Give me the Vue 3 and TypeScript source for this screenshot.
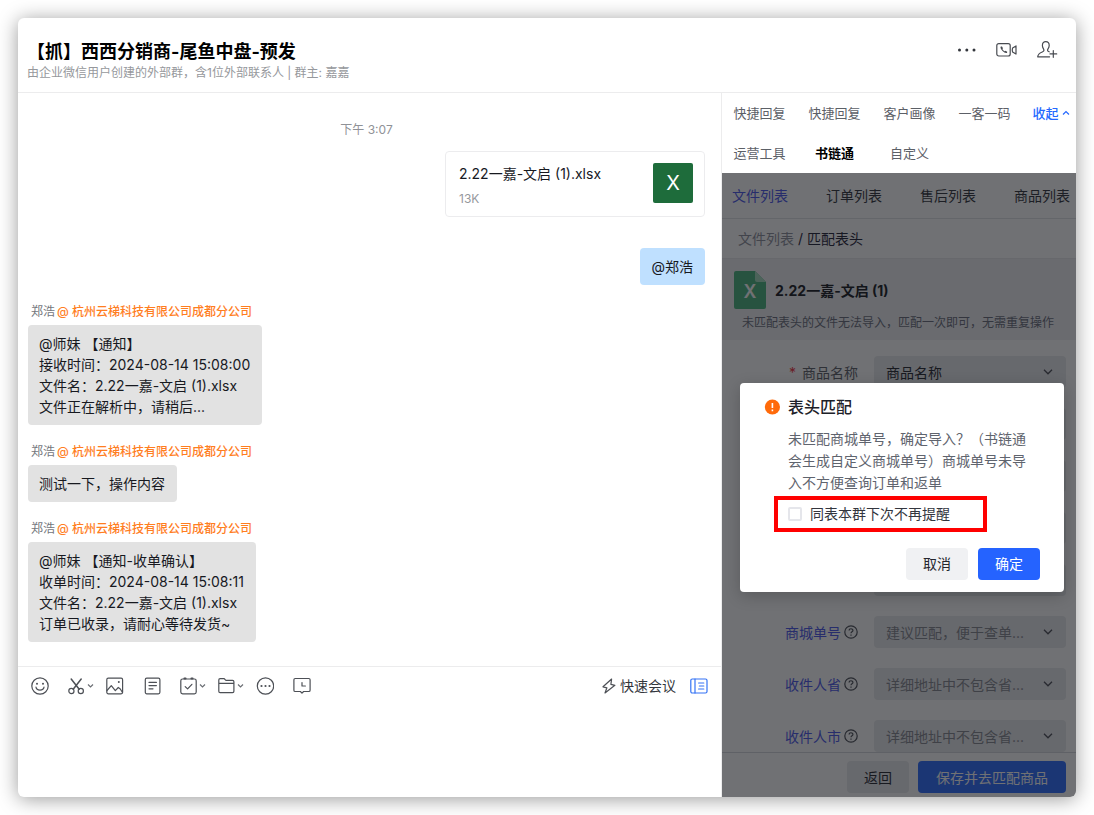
<script setup lang="ts">
import { ref } from 'vue'

interface Message {
  id: number
  lines: string[]
}

interface Field {
  id: string
  label: string
  value: string
  required?: boolean
  filled?: boolean
}

const sender = '郑浩'
const company = '@ 杭州云梯科技有限公司成都分公司'

const messages: Message[] = [
  {
    id: 1,
    lines: [
      '@师妹 【通知】',
      '接收时间：2024-08-14 15:08:00',
      '文件名：2.22一嘉-文启 (1).xlsx',
      '文件正在解析中，请稍后...',
    ],
  },
  { id: 2, lines: ['测试一下，操作内容'] },
  {
    id: 3,
    lines: [
      '@师妹 【通知-收单确认】',
      '收单时间：2024-08-14 15:08:11',
      '文件名：2.22一嘉-文启 (1).xlsx',
      '订单已收录，请耐心等待发货~',
    ],
  },
]

const appTabs = ['快捷回复', '快捷回复', '客户画像', '一客一码']
const moreTabs = ['运营工具', '书链通', '自定义']
const listTabs = ['文件列表', '订单列表', '售后列表', '商品列表']

const fields: Field[] = [
  { id: 'f1', label: '商品名称', value: '商品名称', required: true, filled: true },
  { id: 'f2', label: '', value: '' },
  { id: 'f3', label: '', value: '' },
  { id: 'f4', label: '', value: '' },
  { id: 'f5', label: '', value: '' },
  { id: 'f6', label: '商城单号', value: '建议匹配，便于查单...' },
  { id: 'f7', label: '收件人省', value: '详细地址中不包含省...' },
  { id: 'f8', label: '收件人市', value: '详细地址中不包含省...' },
]

const skipReminder = ref(false)
</script>

<template>
  <div class="page">
    <div class="window">
      <header class="top">
        <div class="heading">
          <h1>【抓】西西分销商-尾鱼中盘-预发</h1>
          <p>由企业微信用户创建的外部群，含1位外部联系人 | 群主: 嘉嘉</p>
        </div>
        <div class="top-actions">
          <button type="button" aria-label="更多">
            <svg width="20" height="20" viewBox="0 0 20 20" fill="#33363c"><circle cx="3.5" cy="10" r="1.5" /><circle cx="10.8" cy="10" r="1.5" /><circle cx="18" cy="10" r="1.5" /></svg>
          </button>
          <button type="button" aria-label="视频通话">
            <svg width="22" height="20" viewBox="0 0 22 20" fill="none" stroke="#484b51" stroke-width="1.2"><rect x="1.800" y="3.600" width="13.400" height="12.400" rx="2" /><path d="M17.600 7.900 21 5.900v8.200l-3.400-2c-.4-1.200-.4-3 0-4.200z" stroke-linejoin="round" /><path d="M5.800 6.600c-.9 1 .2 3 1.800 4.500 1.600 1.500 3.500 2.600 4.500 1.600l.1-1-1.700-1-.9.600C8.800 10.900 7.800 9.900 7.400 9l.600-.8-1-1.700z" fill="#484b51" stroke="none" /></svg>
          </button>
          <button type="button" aria-label="添加成员">
            <svg width="22" height="20" viewBox="0 0 22 20" fill="none" stroke="#484b51" stroke-width="1.2" stroke-linecap="round" stroke-linejoin="round"><path d="M13.200 11.800c-1.600-.6-2-1.600-1.300-2.700.8-1.100 1.300-2.200 1.300-3.600C13.200 3 11.800 1.600 9.800 1.600S6.400 3 6.400 5.500c0 1.400.5 2.500 1.200 3.600.8 1.200.2 2.300-1.300 2.900-2.500 1-4.300 1.700-4.600 4.800H13.600" /><path d="M17.300 10.500v6.800M14 13.900h6.700" /></svg>
          </button>
        </div>
      </header>

      <div class="body">
        <main class="chat">
          <div class="history">
            <time class="stamp">下午 3:07</time>
            <div class="file-card">
              <div class="file-info">
                <span class="file-name">2.22一嘉-文启 (1).xlsx</span>
                <span class="file-size">13K</span>
              </div>
              <div class="file-badge">X</div>
            </div>
            <div class="bubble own">@郑浩</div>
            <section v-for="m in messages" :key="m.id" class="message">
              <div class="sender">{{ sender }}<span>{{ company }}</span></div>
              <div class="bubble">
                <div v-for="line in m.lines" :key="line">{{ line }}</div>
              </div>
            </section>
          </div>

          <div class="composer">
            <div class="toolbar">
              <div class="tools">
                <button type="button" aria-label="表情">
                  <svg class="ico" width="18" height="18" viewBox="0 0 18 18"><circle cx="9" cy="9" r="8.200" /><path d="M5 10.200c.5 3.800 7.500 3.800 8 0" /><circle class="dot" cx="6" cy="6.800" r="1" /><circle class="dot" cx="12" cy="6.800" r="1" /></svg>
                </button>
                <button type="button" class="wide" aria-label="截图">
                  <svg class="ico" width="17" height="18" viewBox="0 0 17 18"><path d="M3.200 2l8 10.200M13.200 2l-8 10.200" stroke-width="1.500" /><circle cx="3.400" cy="14" r="2.600" /><circle cx="12.800" cy="14" r="2.600" /></svg>
                  <svg class="chev" width="7" height="6" viewBox="0 0 7 6"><path d="M1 1.500l2.500 2.500L6 1.500" /></svg>
                </button>
                <button type="button" aria-label="图片">
                  <svg class="ico" width="18" height="18" viewBox="0 0 18 18"><rect x=".8" y="1.200" width="15.800" height="15.600" rx="1.500" /><path d="M1 13.500l4.300-4.800 4 5 3-3.200 2 1.500 2.200 3.500" /><circle class="dot" cx="12.800" cy="5" r="1" /></svg>
                </button>
                <button type="button" aria-label="文档">
                  <svg class="ico" width="18" height="18" viewBox="0 0 18 18"><rect x="2.300" y="1.200" width="14.600" height="15.600" rx="1.500" /><path d="M6 5.400h7.400M6 8.600h7.400M6 11.800h4" /></svg>
                </button>
                <button type="button" class="wide" aria-label="待办">
                  <svg class="ico" width="17" height="18" viewBox="0 0 17 18"><rect x=".8" y="2" width="15.400" height="14.800" rx="1.800" /><path d="M4.400 1.600h1.200M11.400 1.600h1.200" stroke-width="2" /><path d="M5.200 9.600l2.400 2.300 4.300-4.600" /></svg>
                  <svg class="chev" width="7" height="6" viewBox="0 0 7 6"><path d="M1 1.500l2.500 2.500L6 1.500" /></svg>
                </button>
                <button type="button" class="wide" aria-label="文件">
                  <svg class="ico" width="17" height="18" viewBox="0 0 17 18"><path d="M.8 6.400V3c0-.8.500-1.300 1.300-1.300h3.800c1.200 0 1.200 1.700 2.400 1.700h6.300c.8 0 1.300.5 1.300 1.300v9.600c0 .8-.5 1.300-1.300 1.300H2.100c-.8 0-1.300-.5-1.300-1.300zh15" /></svg>
                  <svg class="chev" width="7" height="6" viewBox="0 0 7 6"><path d="M1 1.500l2.500 2.500L6 1.500" /></svg>
                </button>
                <button type="button" aria-label="更多工具">
                  <svg class="ico" width="18" height="18" viewBox="0 0 18 18"><circle cx="9.500" cy="9" r="8.200" /><circle class="dot" cx="5.500" cy="9" r="1.100" /><circle class="dot" cx="9.500" cy="9" r="1.100" /><circle class="dot" cx="13.500" cy="9" r="1.100" /></svg>
                </button>
                <button type="button" aria-label="聊天记录">
                  <svg class="ico" width="18" height="18" viewBox="0 0 18 18"><path d="M2.200 1.500h13.600c.8 0 1.300.5 1.300 1.300v10.400c0 .8-.5 1.300-1.300 1.300h-5.200L9 16.200l-1.600-1.700H2.200c-.8 0-1.300-.5-1.300-1.300V2.800c0-.8.5-1.300 1.300-1.300z" /><path d="M9 5.500V9h3.400" /></svg>
                </button>
              </div>
              <div class="tools-end">
                <button type="button" class="meeting">
                  <svg class="ico" width="14" height="16" viewBox="0 0 14 16"><path d="M9.600 1 1 8.800l3.900 1L3 15l9.900-7.700-4-1z" /></svg>
                  快速会议
                </button>
                <button type="button" aria-label="侧边栏">
                  <svg class="ico blue" width="18" height="18" viewBox="0 0 18 18"><rect x=".8" y="2" width="16.200" height="14" rx="1.500" /><path d="M5 2v14M8.600 6h5.200M9.400 9h4.400M8.600 12h5.200" /></svg>
                </button>
              </div>
            </div>
          </div>
        </main>

        <aside class="side">
          <nav class="apps">
            <button v-for="(t, i) in appTabs" :key="i" type="button">{{ t }}</button>
            <button type="button" class="fold">
              收起<svg width="8" height="6" viewBox="0 0 8 6"><path d="M1 4.500 4 1.600l3 2.900" /></svg>
            </button>
            <button v-for="t in moreTabs" :key="t" type="button" :class="{ current: t === '书链通' }">{{ t }}</button>
          </nav>

          <div class="panel">
            <nav class="lists">
              <button v-for="(t, i) in listTabs" :key="t" type="button" :class="{ on: i === 0 }">{{ t }}</button>
            </nav>
            <div class="crumbs"><a href="#">文件列表</a> / <b>匹配表头</b></div>
            <div class="sheet">
              <div class="sheet-title">
                <div class="sheet-icon">
                  <svg width="32" height="38" viewBox="0 0 32 38"><path d="M2 0h19l11 11v25a2 2 0 0 1-2 2H2a2 2 0 0 1-2-2V2a2 2 0 0 1 2-2z" fill="#49b57d" /><path d="M21 0l11 11H23a2 2 0 0 1-2-2z" fill="#a5dcbf" /></svg>
                  <span>X</span>
                </div>
                <strong>2.22一嘉-文启 (1)</strong>
              </div>
              <p>未匹配表头的文件无法导入，匹配一次即可，无需重复操作</p>
            </div>
            <form class="fields" @submit.prevent>
              <div v-for="f in fields" :key="f.id" class="field">
                <label :for="f.id" :class="{ plain: f.required }">
                  <i v-if="f.required">*</i>{{ f.label }}
                  <svg v-if="f.label && !f.required" width="14" height="14" viewBox="0 0 14 14"><circle cx="7" cy="7" r="6.200" /><path d="M5.100 5.600c0-2.500 3.900-2.400 3.800-.1 0 1.300-1.900 1.400-1.900 2.800M7 9.600v1.200" /></svg>
                </label>
                <div class="pick">
                  <select :id="f.id" :class="{ filled: f.filled }"><option>{{ f.value }}</option></select>
                  <svg width="10" height="8" viewBox="0 0 10 8"><path d="M1 1.800l4 4 4-4" /></svg>
                </div>
              </div>
            </form>
            <footer class="actions">
              <button type="button" class="back">返回</button>
              <button type="button" class="save">保存并去匹配商品</button>
            </footer>

            <div class="mask">
              <div class="dialog" role="dialog" aria-labelledby="dialog-title">
                <div class="dialog-head">
                  <svg width="16" height="16" viewBox="0 0 16 16"><circle cx="8.400" cy="8" r="7.600" fill="#ff6a0a" /><path d="M8.400 4v5M8.400 10.600v1.600" stroke="#fff" stroke-width="1.600" /></svg>
                  <h2 id="dialog-title">表头匹配</h2>
                </div>
                <p>未匹配商城单号，确定导入？（书链通会生成自定义商城单号）商城单号未导入不方便查询订单和返单</p>
                <label class="remind">
                  <input v-model="skipReminder" type="checkbox" />
                  同表本群下次不再提醒
                </label>
                <div class="dialog-actions">
                  <button type="button" class="cancel">取消</button>
                  <button type="button" class="ok">确定</button>
                </div>
              </div>
            </div>
          </div>
        </aside>
      </div>
    </div>
  </div>
</template>

<style>
body {
  background: #fff;
}
</style>

<style scoped>
.page,
.page * {
  box-sizing: border-box;
}
.page {
  min-height: 100vh;
  padding: 18px;
  display: flex;
  font-family: Inter, 'Noto Sans CJK SC', sans-serif;
  font-size: 14px;
  line-height: 21px;
  color: #17191f;
  text-spacing-trim: space-all;
}
h1, h2, p {
  margin: 0;
}
button {
  font: inherit;
  color: inherit;
  background: none;
  border: 0;
  padding: 0;
  white-space: nowrap;
}
svg {
  display: block;
  flex: none;
}
.window {
  flex: 1;
  display: flex;
  flex-direction: column;
  border-radius: 6px;
  overflow: hidden;
  background: #fff;
  box-shadow: 0 2px 20px rgba(0, 0, 0, 0.4);
}
.top {
  height: 75px;
  padding: 0 18px 0 9px;
  border-bottom: 1px solid #ececed;
  display: flex;
  justify-content: space-between;
}
.heading {
  padding-top: 22px;
}
h1 {
  font-size: 18px;
  line-height: 24px;
  font-weight: 700;
  color: #000;
}
.heading p {
  font-size: 12px;
  line-height: 17px;
  color: #96989c;
}
.top-actions {
  display: flex;
  gap: 19px;
  padding-top: 22px;
  height: 42px;
}
.body {
  flex: 1;
  display: grid;
  grid-template-columns: minmax(0, 1fr) 355px;
}
.chat {
  display: flex;
  flex-direction: column;
}
.history {
  padding: 27px 16px 24px 10px;
  display: flex;
  flex-direction: column;
  align-items: flex-start;
}
.stamp {
  align-self: center;
  font-size: 12px;
  line-height: 20px;
  color: #909297;
}
.file-card {
  align-self: flex-end;
  width: 260px;
  height: 66px;
  margin-top: 11px;
  padding: 11px 11px 0 13px;
  border: 1px solid #ececee;
  border-radius: 4px;
  display: flex;
  align-items: flex-start;
  justify-content: space-between;
}
.file-info {
  display: flex;
  flex-direction: column;
  gap: 4px;
}
.file-size {
  font-size: 12px;
  color: #96989c;
}
.file-badge {
  width: 40px;
  height: 40px;
  border-radius: 2px;
  background: #1e6c3b;
  color: #fff;
  font-size: 20px;
  line-height: 40px;
  text-align: center;
}
.bubble {
  padding: 8px 12px 8px 11px;
  border-radius: 4px;
  background: #e2e2e2;
}
.bubble.own {
  align-self: flex-end;
  margin: 31px 0 17px;
  background: #bfe0ff;
}
.message {
  display: flex;
  flex-direction: column;
  align-items: flex-start;
  margin-bottom: 17px;
}
.message:last-child {
  margin-bottom: 0;
}
.sender {
  padding: 0 3px 3px;
  font-size: 12px;
  line-height: 20px;
  color: #73767c;
}
.sender span {
  margin-left: 2px;
  color: #ff7e1f;
  font-weight: 500;
}
.composer {
  flex: 1;
  border-top: 1px solid #ececed;
}
.toolbar {
  display: flex;
  align-items: center;
  justify-content: space-between;
  padding: 8px 13px;
}
.tools,
.tools-end {
  display: flex;
  align-items: center;
  gap: 19px;
}
.tools-end {
  gap: 14px;
}
.wide {
  display: flex;
  align-items: center;
  gap: 2px;
  margin-right: -7px;
}
.ico {
  fill: none;
  stroke: #4d5056;
  stroke-width: 1.2;
  stroke-linecap: round;
  stroke-linejoin: round;
}
.ico.blue {
  stroke: #3473f5;
}
.ico .dot {
  fill: #4d5056;
  stroke: none;
}
.chev {
  fill: none;
  stroke: #6b6e74;
  stroke-width: 1.2;
}
.meeting {
  display: flex;
  align-items: center;
  gap: 4px;
  color: #33363c;
}
.side {
  border-left: 1px solid #ececed;
  display: flex;
  flex-direction: column;
}
.apps {
  display: grid;
  grid-template-columns: repeat(4, 75px) 1fr;
  grid-auto-rows: 40px;
  font-size: 13px;
  color: #5c6067;
}
.apps .fold {
  display: flex;
  align-items: center;
  justify-content: center;
  gap: 3px;
  padding-left: 4px;
  color: #2468ff;
  font-weight: 500;
}
.fold svg {
  fill: none;
  stroke: #2468ff;
  stroke-width: 1.2;
}
.apps .current {
  color: #000;
  font-weight: 700;
}
.panel {
  position: relative;
  flex: 1;
  display: flex;
  flex-direction: column;
  background: #fff;
}
.lists {
  height: 46px;
  padding: 0 6px 0 10px;
  display: flex;
  justify-content: space-between;
  border-bottom: 1px solid #e2e3e6;
  color: #30333a;
}
.lists .on {
  color: #4955ea;
}
.crumbs {
  height: 40px;
  padding-left: 16px;
  line-height: 40px;
  border-bottom: 1px solid #e8e9ec;
  color: #1e2136;
}
.crumbs a {
  color: #8d909b;
  text-decoration: none;
}
.crumbs b {
  font-weight: 400;
}
.sheet {
  height: 81px;
  padding: 12px 12px 0;
  background: #f0f1f3;
}
.sheet-title {
  display: flex;
  align-items: center;
  gap: 9px;
}
.sheet-icon {
  display: grid;
}
.sheet-icon > * {
  grid-area: 1 / 1;
}
.sheet-icon span {
  place-self: end center;
  font-size: 18px;
  line-height: 34px;
  font-weight: 600;
  color: #fff;
}
.sheet p {
  margin-top: 4px;
  padding-left: 8px;
  font-size: 12px;
  line-height: 20px;
  color: #696c7a;
  white-space: nowrap;
}
.fields {
  flex: 1;
  padding: 16px 10px 0 0;
  display: flex;
  flex-direction: column;
  gap: 20px;
}
.field {
  display: grid;
  grid-template-columns: 1fr 192px;
  gap: 16px;
  height: 32px;
}
.field label {
  display: flex;
  align-items: center;
  justify-content: flex-end;
  gap: 3px;
  color: #4955ea;
}
.field label.plain {
  gap: 6px;
  color: #5c5f68;
}
.field i {
  font-style: normal;
  color: #f0323c;
}
.field svg {
  fill: none;
  stroke: #4b4e56;
  stroke-width: 1.2;
}
.pick {
  display: grid;
  align-items: center;
}
.pick > * {
  grid-area: 1 / 1;
}
.pick svg {
  justify-self: end;
  margin-right: 13px;
  stroke-width: 1.3;
}
.pick select {
  appearance: none;
  width: 100%;
  height: 32px;
  padding: 0 12px;
  border: 0;
  border-radius: 4px;
  background: #e9eaed;
  font: inherit;
  color: #85888f;
}
.pick select.filled {
  color: #25272e;
}
.actions {
  height: 45px;
  padding: 8px 10px 0 0;
  border-top: 1px solid #d5d7dc;
  background: #fff;
  display: flex;
  justify-content: flex-end;
  align-items: flex-start;
  gap: 9px;
}
.actions button {
  height: 32px;
  padding: 0 17px;
  border-radius: 4px;
}
.actions .back {
  background: #e9eaed;
  color: #25272e;
}
.actions .save {
  padding: 0 18px;
  background: #2b6bff;
  color: #fff;
}
.mask {
  position: absolute;
  inset: 0;
  display: flex;
  align-items: center;
  padding: 4px 12px 0 18px;
  background: rgba(16, 18, 23, 0.6);
}
.dialog {
  flex: 1;
  padding: 12px 24px;
  border-radius: 4px;
  background: #fff;
  box-shadow: 0 4px 16px rgba(0, 0, 0, 0.2);
}
.dialog-head {
  display: flex;
  align-items: center;
  gap: 8px;
}
h2 {
  font-size: 16px;
  line-height: 24px;
  font-weight: 500;
  color: #1d2129;
}
.dialog p {
  margin: 9px 8px 0 24px;
  line-height: 22px;
  color: #5f646e;
}
.remind {
  display: flex;
  align-items: center;
  gap: 8px;
  width: 213px;
  height: 36px;
  margin: 2px 0 0 10px;
  padding-left: 10px;
  border: 4px solid #f00;
  color: #33363e;
}
.remind input {
  appearance: none;
  width: 14px;
  height: 14px;
  margin: 0;
  border: 2px solid #e5e6eb;
  border-radius: 2px;
}
.remind input:checked {
  background: #2563ff;
}
.dialog-actions {
  margin-top: 16px;
  display: flex;
  justify-content: flex-end;
  gap: 10px;
}
.dialog-actions button {
  height: 32px;
  padding: 0 17px;
  border-radius: 4px;
  background: #f0f1f3;
  color: #25272e;
}
.dialog-actions .ok {
  background: #2563ff;
  color: #fff;
}
</style>
